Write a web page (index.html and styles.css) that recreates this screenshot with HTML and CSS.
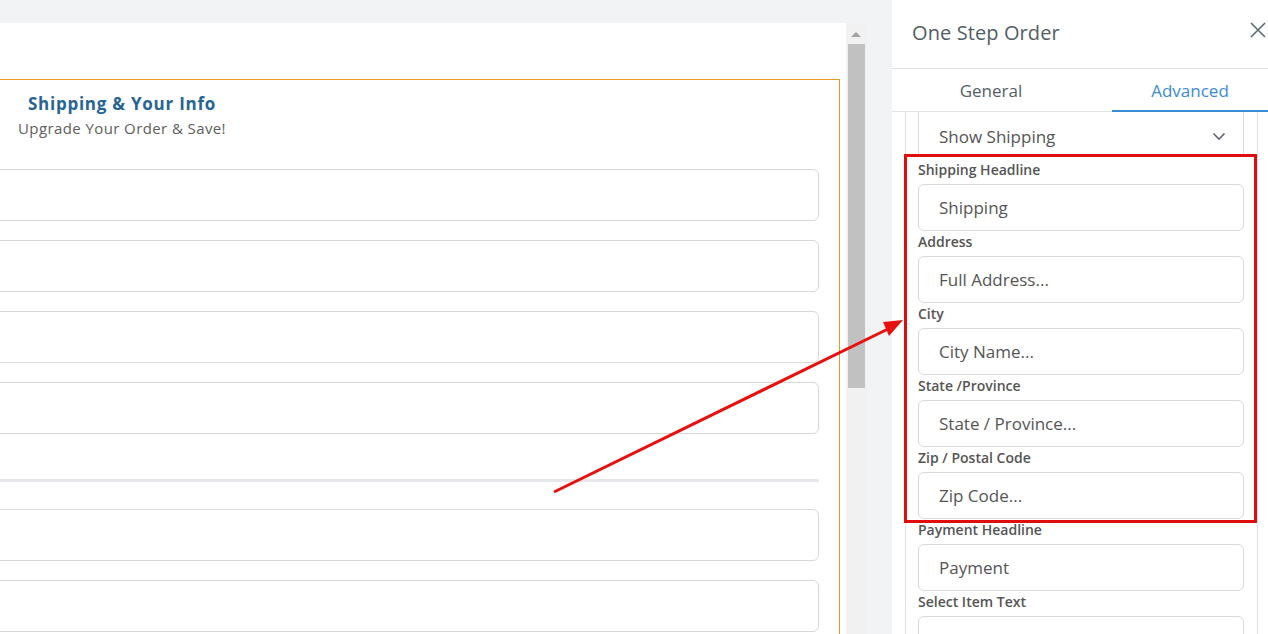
FILE: index.html
```html
<!DOCTYPE html>
<html lang="en">

<head>
    <meta charset="UTF-8">
    <meta name="viewport" content="width=device-width, initial-scale=1.0">
    <title>One Step Order</title>
    <link rel="stylesheet" href="styles.css">
</head>

<body>
    <div class="canvas">
        <div class="page">
            <div class="order-box">
                <div class="order-head">
                    <h2 class="order-title">Shipping &amp; Your Info</h2>
                    <p class="order-sub">Upgrade Your Order &amp; Save!</p>
                </div>
                <div class="order-fields">
                    <div class="order-input"></div>
                    <div class="order-input"></div>
                    <div class="order-input"></div>
                    <div class="order-input"></div>
                    <div class="order-sep"></div>
                    <div class="order-input"></div>
                    <div class="order-input"></div>
                </div>
            </div>
        </div>
        <!-- fake scrollbar of the preview frame -->
        <div class="scrollbar">
            <div class="scroll-arrow"></div>
            <div class="scroll-thumb"></div>
        </div>
    </div>

    <div class="sidebar">
        <div class="side-header">
            <span class="side-title">One Step Order</span>
            <svg class="close-icon" width="16" height="16" viewBox="0 0 16 16">
                <path d="M1 1 L15 15 M15 1 L1 15" stroke="#5f6b73" stroke-width="1.6" fill="none"/>
            </svg>
        </div>
        <div class="tabs">
            <div class="tab">General</div>
            <div class="tab active">Advanced</div>
        </div>
        <div class="side-body">
            <div class="section">
                <div class="select">
                    <span>Show Shipping</span>
                    <svg width="14" height="9" viewBox="0 0 14 9">
                        <path d="M1.5 1.5 L7 7 L12.5 1.5" stroke="#5f6670" stroke-width="1.6" fill="none"/>
                    </svg>
                </div>
                <div class="field">
                    <label>Shipping Headline</label>
                    <div class="input">Shipping</div>
                </div>
                <div class="field">
                    <label>Address</label>
                    <div class="input">Full Address...</div>
                </div>
                <div class="field">
                    <label>City</label>
                    <div class="input">City Name...</div>
                </div>
                <div class="field">
                    <label>State /Province</label>
                    <div class="input">State / Province...</div>
                </div>
                <div class="field">
                    <label>Zip / Postal Code</label>
                    <div class="input">Zip Code...</div>
                </div>
                <div class="field">
                    <label>Payment Headline</label>
                    <div class="input">Payment</div>
                </div>
                <div class="field">
                    <label>Select Item Text</label>
                    <div class="input"></div>
                </div>
            </div>
        </div>
    </div>

    <!-- annotation drawn over the screenshot -->
    <svg class="annotation" width="1268" height="634" viewBox="0 0 1268 634">
        <rect x="905.5" y="155.5" width="350" height="366" fill="none" stroke="#e00d0d" stroke-width="3"/>
        <line x1="554" y1="492" x2="888" y2="329" stroke="#e8100f" stroke-width="3"/>
        <polygon points="903,320 883,322 889,336" fill="#e8100f"/>
    </svg>
</body>

</html>
```

FILE: styles.css
```css
body {
    margin: 0;
    height: 634px;
    overflow: hidden;
    display: flex;
    background-color: #f2f3f5;
    font-family: "Open Sans", "Liberation Sans", sans-serif;
    position: relative;
}

/* left preview */
.canvas {
    width: 892px;
    flex: none;
    display: flex;
    padding-top: 23px;
    box-sizing: border-box;
}

.page {
    width: 846px;
    background-color: #fff;
    overflow: hidden;
}

.order-box {
    margin: 56px 6px 0 -40px;
    border: 1px solid #eb9a2c;
    height: 700px;
}

.order-head {
    width: 322px;
    text-align: center;
    padding-top: 12px;
}

.order-title {
    margin: 0;
    font-size: 17px;
    line-height: 24px;
    font-weight: 700;
    color: #266593;
    letter-spacing: 0.75px;
}

.order-sub {
    margin: 0;
    font-size: 15px;
    line-height: 24px;
    color: #606060;
    letter-spacing: 0.4px;
}

.order-fields {
    padding: 0 20px 0 20px;
    margin-top: 29px;
}

.order-input {
    height: 52px;
    box-sizing: border-box;
    border: 1px solid #d8d8d8;
    border-radius: 6px;
    margin-bottom: 19px;
}

.order-sep {
    height: 3px;
    background-color: #e7e7eb;
    margin: 45px 0 27px;
}

.scrollbar {
    width: 20px;
    flex: none;
    background-color: #f1f1f1;
}

.scroll-arrow {
    width: 0;
    height: 0;
    margin: 9px auto 7px;
    border-left: 5px solid transparent;
    border-right: 5px solid transparent;
    border-bottom: 5px solid #a3a3a3;
}

.scroll-thumb {
    height: 344px;
    margin: 0 1px 0 2px;
    background-color: #c1c1c1;
}

/* right settings panel */
.sidebar {
    width: 376px;
    flex: none;
    background-color: #fff;
    display: flex;
    flex-direction: column;
}

.side-header {
    height: 68px;
    display: flex;
    align-items: center;
    justify-content: space-between;
    padding: 0 2px 0 20px;
    border-bottom: 1px solid #e3e3e3;
}

.side-title {
    font-size: 20px;
    color: #535d66;
    margin-top: -3px;
    letter-spacing: 0.1px;
}

.close-icon {
    margin-top: -8px;
}

.tabs {
    display: grid;
    grid-template-columns: 220px 1fr;
    height: 42px;
    border-bottom: 1px solid #e3e3e3;
}

.tab {
    display: flex;
    align-items: center;
    justify-content: center;
    font-size: 17px;
    color: #545e66;
}

.tab:first-child {
    padding-right: 22px;
}

.tab.active {
    color: #3a8bd8;
    border-bottom: 2px solid #3a8bd8;
    margin-bottom: -1px;
    padding-top: 1px;
}

.side-body {
    flex: 1;
    overflow: hidden;
}

.section {
    margin: -3px 10px 0 13px;
    padding: 0 13px 0 12px;
    border-left: 1px solid #e3e3e3;
    border-right: 1px solid #e3e3e3;
}

.select {
    height: 47px;
    box-sizing: border-box;
    border: 1px solid #dcdcdc;
    border-top: none;
    display: flex;
    align-items: center;
    justify-content: space-between;
    padding: 8px 17px 0 20px;
    font-size: 17px;
    color: #555;
    margin-bottom: 4px;
}

.field {
    margin-top: 1px;
}

.field label {
    display: block;
    font-size: 14px;
    line-height: 20px;
    font-weight: 600;
    color: #555;
    margin-bottom: 4px;
}

.input {
    height: 47px;
    box-sizing: border-box;
    border: 1px solid #d9d9d9;
    border-radius: 6px;
    padding: 0 20px;
    display: flex;
    align-items: center;
    font-size: 17px;
    color: #555;
}

.annotation {
    position: absolute;
    left: 0;
    top: 0;
    pointer-events: none;
}
```
